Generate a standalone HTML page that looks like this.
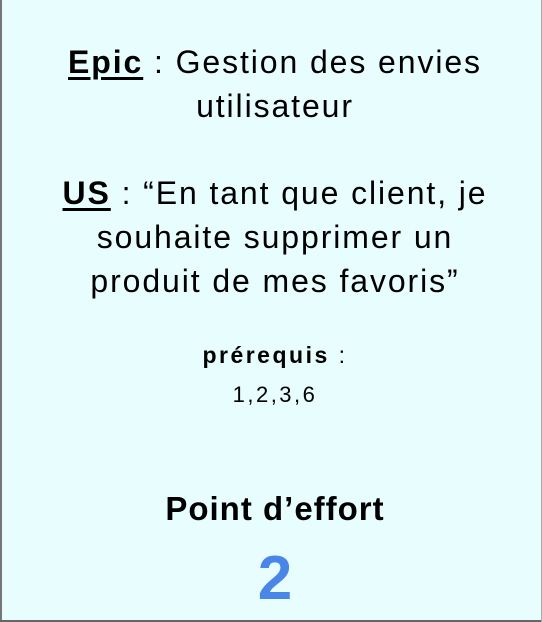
<!DOCTYPE html>
<html><head><meta charset="utf-8"><style>
html,body{margin:0;padding:0}
body{width:542px;height:622px;background:#e8fdfd;position:relative;overflow:hidden;font-family:"Liberation Sans",sans-serif;color:#000}
.bl{position:absolute;left:0;top:0;width:2px;height:622px;background:#777}
.bb{position:absolute;left:0;top:620px;width:542px;height:2px;background:#666}
.br{position:absolute;right:0;top:0;width:1px;height:622px;background:#aaa}
.l{position:absolute;left:4px;width:542px;text-align:center;white-space:nowrap}
.big{font-size:32px;line-height:44px;letter-spacing:1.9px}
b u{text-decoration-thickness:3px;text-underline-offset:4px}
</style></head><body>
<div class="bl"></div><div class="bb"></div><div class="br"></div>
<div class="l big" style="top:40px"><b><u>Epic</u></b> : Gestion des envies</div>
<div class="l big" style="top:84px">utilisateur</div>
<div class="l big" style="top:171px"><b><u>US</u></b> : “En tant que client, je</div>
<div class="l big" style="top:215px">souhaite supprimer un</div>
<div class="l big" style="top:259px">produit de mes favoris”</div>
<div class="l" style="top:342px;font-size:23px;letter-spacing:2.5px"><b>prérequis</b> :</div>
<div class="l" style="top:382px;font-size:22px;letter-spacing:2.5px">1,2,3,6</div>
<div class="l" style="top:490px;font-size:33px;font-weight:bold;letter-spacing:1px">Point d’effort</div>
<div class="l" style="top:543px;font-size:62px;font-weight:bold;color:#4a86e8">2</div>
</body></html>
